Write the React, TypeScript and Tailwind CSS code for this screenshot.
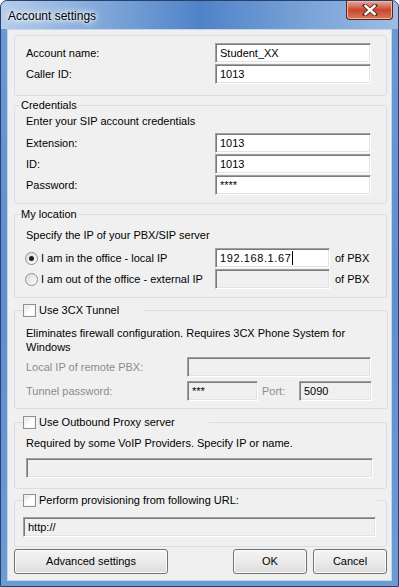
import React from 'react';

const INPUT =
  'h-[20px] border border-t-[#a0a0a0] border-l-[#a0a0a0] border-r-white border-b-white shadow-[inset_1px_1px_0_#7a7a7a,inset_-1px_-1px_0_#e3e3e3] flex items-center px-[4px] text-black';

function Field({ value, className = '', disabled = false, caret = false }: { value?: string; className?: string; disabled?: boolean; caret?: boolean }) {
  return (
    <div className={`${INPUT} ${disabled ? 'bg-[#f0f0f0] text-[#8c8c8c]' : 'bg-white'} ${className}`}>
      <span className="whitespace-nowrap">{value}</span>
      {caret && <span className="ml-px inline-block h-[14px] w-px bg-black" />}
    </div>
  );
}

function Check({ label, w }: { label: string; w: string }) {
  return (
    <legend className={`ml-[8px] ${w}`}>
      <span className="flex h-[13px] items-center gap-[3px]">
        <span className="h-[13px] w-[13px] shrink-0 border border-[#8e8f8f] bg-gradient-to-br from-[#dcdcdc] via-white to-white shadow-[inset_0_0_0_1px_#f4f4f4]" />
        <span className="whitespace-nowrap">{label}</span>
      </span>
    </legend>
  );
}

function Radio({ checked = false }: { checked?: boolean }) {
  return (
    <span className="flex h-[13px] w-[13px] shrink-0 items-center justify-center rounded-full border border-[#8e8f8f] bg-gradient-to-br from-[#d9d9d9] to-white">
      {checked && <span className="h-[5px] w-[5px] rounded-full bg-[#1f1f1f]" />}
    </span>
  );
}

function Button({ label, className = '' }: { label: string; className?: string }) {
  return (
    <div className={`flex h-[25px] items-center justify-center rounded-[3px] border border-[#707070] bg-gradient-to-b from-[#f4f4f4] via-[#ebebeb] to-[#dbdbdb] shadow-[inset_0_0_0_1px_#fcfcfc] ${className}`}>
      {label}
    </div>
  );
}

export default function App() {
  const group = 'rounded-[3px] border border-[#d5dfe5] p-0 m-0';
  return (
    <div className="flex h-[587px] w-[399px] flex-col overflow-hidden rounded-t-[7px] border border-[#27416a] bg-gradient-to-b from-[#6b9ad6] via-[#5d8ed0] to-[#6c9bd6] font-['Liberation_Sans',Arial,sans-serif] text-[11px] leading-[13px] text-black">
      {/* Title bar */}
      <div className="flex h-[28px] items-start justify-between bg-gradient-to-r from-[#b5cdeb] via-[#4f83c8] to-[#9dbde4]">
        <span className="ml-[7px] mt-[8px] text-[12px] leading-[14px] text-black [text-shadow:0_0_6px_#fff,0_0_3px_#fff,0_0_10px_#fff]">
          Account settings
        </span>
        <div className="mr-[5px] flex h-[19px] w-[47px] items-center justify-center rounded-b-[4px] border border-t-0 border-[#5a2218] bg-gradient-to-b from-[#e9a99a] via-[#c8452e] to-[#d9785c] shadow-[inset_0_0_0_1px_#eeb7a9]">
          <svg width="16" height="12" viewBox="0 0 16 12">
            <path d="M3 1.5 L13 10.5 M13 1.5 L3 10.5" stroke="#5a2a22" strokeWidth="4.2" strokeLinecap="square" />
            <path d="M3.5 2 L12.5 10 M12.5 2 L3.5 10" stroke="#ffffff" strokeWidth="2.4" strokeLinecap="square" />
          </svg>
        </div>
      </div>

      {/* Client area */}
      <div className="mx-[6px] flex h-[552px] flex-col border border-[#c6d5e8] bg-[#f0f0f0] pl-[6px] pr-[4px]">
        {/* Account */}
        <div className="mt-[5px] flex flex-col gap-px rounded-[3px] border border-[#d5dfe5] pb-[11px] pl-[11px] pr-[15px] pt-[7px]">
          <div className="flex items-center justify-between">
            <span>Account name:</span>
            <Field value="Student_XX" className="w-[156px]" />
          </div>
          <div className="flex items-center justify-between">
            <span>Caller ID:</span>
            <Field value="1013" className="w-[156px]" />
          </div>
        </div>

        {/* Credentials */}
        <fieldset className={`${group} mt-[3px]`}>
          <legend className="ml-[5px] px-px">Credentials</legend>
          <div className="flex flex-col pb-[8px] pl-[11px] pr-[15px]">
            <span className="mt-[3px]">Enter your SIP account credentials</span>
            <div className="mt-[5px] flex flex-col gap-px">
              {[
                ['Extension:', '1013'],
                ['ID:', '1013'],
                ['Password:', '****'],
              ].map(([l, v]) => (
                <div key={l} className="flex items-center justify-between">
                  <span>{l}</span>
                  <Field value={v} className="w-[156px]" />
                </div>
              ))}
            </div>
          </div>
        </fieldset>

        {/* Location */}
        <fieldset className={`${group} mt-[4px]`}>
          <legend className="ml-[5px] px-px">My location</legend>
          <div className="flex flex-col pb-[8px] pl-[10px]">
            <span className="ml-px mt-[8px]">Specify the IP of your PBX/SIP server</span>
            <div className="mt-[6px] flex flex-col gap-px">
              <div className="flex items-center">
                <div className="flex w-[190px] items-center gap-[3px]">
                  <Radio checked />
                  <span>I am in the office - local IP</span>
                </div>
                <Field value="192.168.1.67" caret className="w-[115px] tracking-[0.6px]" />
                <span className="ml-[5px]">of PBX</span>
              </div>
              <div className="flex items-center">
                <div className="flex w-[190px] items-center gap-[3px]">
                  <Radio />
                  <span>I am out of the office - external IP</span>
                </div>
                <Field disabled className="w-[115px]" />
                <span className="ml-[5px]">of PBX</span>
              </div>
            </div>
          </div>
        </fieldset>

        {/* Tunnel */}
        <fieldset className={`${group} mt-[6px]`}>
          <Check label="Use 3CX Tunnel" w="w-[121px]" />
          <div className="flex flex-col pb-[7px] pl-[11px] pr-[15px]">
            <p className="mt-[9px] leading-[14px]">
              Eliminates firewall configuration. Requires 3CX Phone System for Windows
            </p>
            <div className="mt-[3px] flex items-center">
              <span className="w-[161px] text-[#8c8c8c]">Local IP of remote PBX:</span>
              <Field disabled className="w-[184px]" />
            </div>
            <div className="mt-[4px] flex items-center">
              <span className="w-[161px] text-[#8c8c8c]">Tunnel password:</span>
              <Field disabled value="***" className="w-[71px]" />
              <span className="ml-[4px] w-[37px] text-[#8c8c8c]">Port:</span>
              <Field disabled value="5090" className="w-[73px]" />
            </div>
          </div>
        </fieldset>

        {/* Proxy */}
        <fieldset className={`${group} mt-[7px]`}>
          <Check label="Use Outbound Proxy server" w="w-[186px]" />
          <div className="flex flex-col pb-[10px] pl-[11px]">
            <span className="mt-[8px]">Required by some VoIP Providers. Specify IP or name.</span>
            <Field disabled className="mt-[8px] w-[347px]" />
          </div>
        </fieldset>

        {/* Provisioning */}
        <fieldset className={`${group} mt-[5px]`}>
          <Check label="Perform provisioning from following URL:" w="w-[354px]" />
          <div className="flex flex-col pb-[9px] pl-[8px]">
            <Field disabled value="http://" className="mt-[10px] w-[353px]" />
          </div>
        </fieldset>

        {/* Buttons */}
        <div className="mt-[2px] flex items-center">
          <Button label="Advanced settings" className="w-[154px]" />
          <Button label="OK" className="ml-auto w-[74px]" />
          <Button label="Cancel" className="ml-[6px] w-[74px]" />
        </div>
      </div>
    </div>
  );
}
